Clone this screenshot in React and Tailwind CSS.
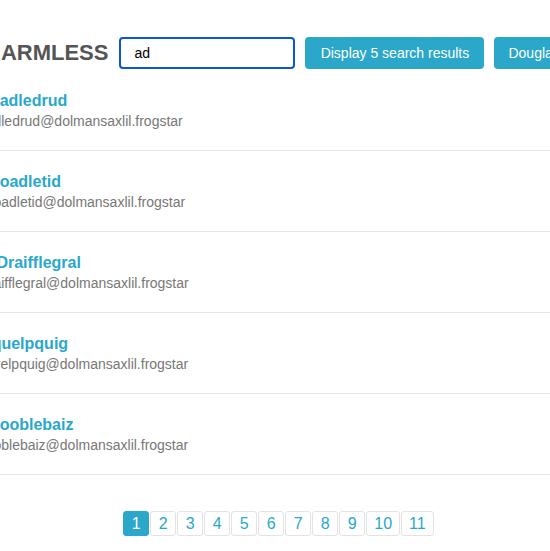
import { useState } from "react";

const people = [
  { name: "Gradledrud", email: "radledrud@dolmansaxlil.frogstar" },
  { name: "Groadletid", email: "groadletid@dolmansaxlil.frogstar" },
  { name: "A Draifflegral", email: "draifflegral@dolmansaxlil.frogstar" },
  { name: "Squelpquig", email: "sqrelpquig@dolmansaxlil.frogstar" },
  { name: "Grooblebaiz", email: "rooblebaiz@dolmansaxlil.frogstar" },
];

const pages = [1, 2, 3, 4, 5, 6, 7, 8, 9, 10, 11];

const App = () => {
  const [query, setQuery] = useState("ad");
  const [page, setPage] = useState(1);

  return (
    <div className="w-[550px] h-[551px] overflow-hidden bg-white font-['Liberation_Sans',Arial,sans-serif]">
      <div className="w-[595px] -ml-[19px]">
        {/* Header */}
        <div className="flex items-center pt-[37px] whitespace-nowrap">
          <h1 className="ml-[4px] text-[22px] font-bold leading-8 text-[#555555]">
            HARMLESS
          </h1>
          <input
            value={query}
            onChange={(e) => setQuery(e.target.value)}
            className="ml-[11px] w-[176px] h-8 shrink-0 border-2 border-[#0b57d0] rounded-[4px] pl-[13px] text-sm text-black outline-none"
          />
          <button className="ml-[10px] w-[179px] h-8 shrink-0 bg-[#2aa7c9] text-white text-sm rounded-[4px]">
            Display 5 search results
          </button>
          <button className="ml-[10px] h-8 shrink-0 px-[14px] bg-[#2aa7c9] text-white text-sm rounded-[4px]">
            Douglas Adams
          </button>
        </div>

        {/* Results */}
        <ul className="mt-px">
          {people.map((p) => (
            <li
              key={p.email}
              className="pt-5 pb-5 border-b border-[#e6e6e6] whitespace-nowrap"
            >
              <div className="text-base font-bold leading-[22px] text-[#29a8cb]">
                {p.name}
              </div>
              <div className="text-sm leading-[18px] text-[#777777]">{p.email}</div>
            </li>
          ))}
        </ul>

        {/* Pagination */}
        <div className="mt-9 flex justify-center gap-[1px]">
          {pages.map((n) => (
            <button
              key={n}
              onClick={() => setPage(n)}
              className={`h-[25px] px-[7px] min-w-[26px] border rounded-[3px] text-base leading-none ${
                page === n
                  ? "bg-[#2aa7c9] border-[#2aa7c9] text-white"
                  : "bg-white border-[#e3e3e3] text-[#29a8cb]"
              }`}
            >
              {n}
            </button>
          ))}
        </div>
      </div>
    </div>
  );
};

export default App;
